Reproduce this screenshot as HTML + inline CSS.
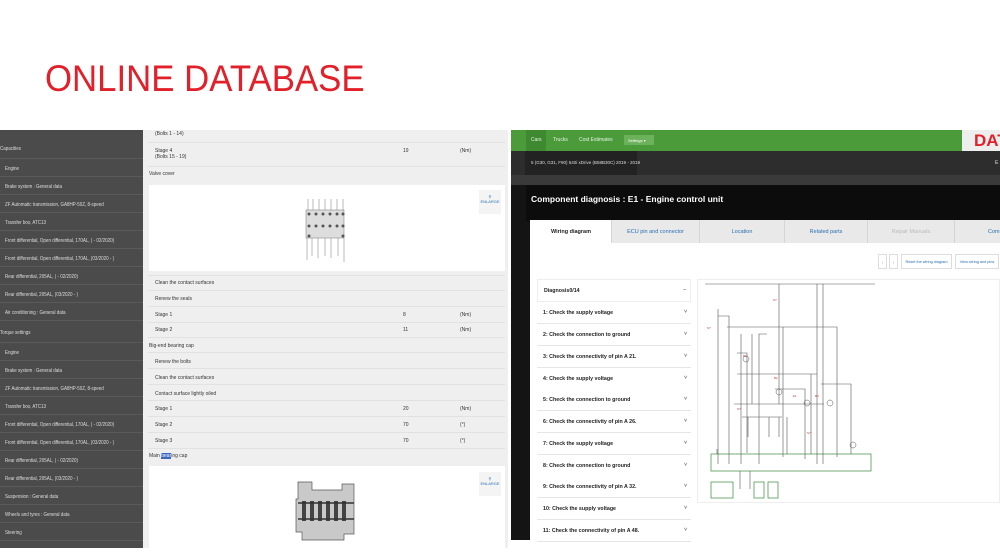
<!DOCTYPE html>
<html><head><meta charset="utf-8"><style>
*{margin:0;padding:0;box-sizing:border-box}
body{width:1000px;height:560px;background:#fff;position:relative;overflow:hidden;font-family:"Liberation Sans",sans-serif}
.a{position:absolute}
h1{position:absolute;left:45px;top:58px;font-weight:400;font-size:37px;color:#e2202a;white-space:nowrap;transform:scaleX(.94);transform-origin:left;font-family:"Liberation Sans",sans-serif}
.sb{left:0;top:130px;width:143px;height:418px;background:#4b4b4b}
.si{position:absolute;left:5px;font-size:5px;color:#ddd;white-space:nowrap;transform:scaleX(.9);transform-origin:left}
.sl{position:absolute;left:0;width:143px;height:1px;background:#5a5a5a}
.ct{left:143px;top:130px;width:365px;height:418px;background:#efefef}
.r{position:absolute;left:148px;width:357px;height:1px;background:#e2e2e2}
.t{position:absolute;font-size:5px;color:#333;white-space:nowrap}
.dl{position:absolute;left:537px;width:154px;height:22px;border-bottom:1px solid #e6e6e6;background:#fff;font-size:5.3px;color:#222;padding:8px 0 0 6px;font-weight:bold}
.dl span{position:absolute;right:4px;top:7px;font-size:5px;color:#666}
.tab{position:absolute;top:220px;height:23px;background:#e9e9e9;border-right:1px solid #d5d5d5;font-size:5.5px;color:#2a6fb4;text-align:center;padding-top:9px}
</style></head><body>
<h1>ONLINE DATABASE</h1>

<div class="a sb"></div>
<div class="si" style="top:146px;left:0">Capacities</div>
<div class="si" style="top:166px">Engine</div>
<div class="si" style="top:184px">Brake system : General data</div>
<div class="si" style="top:202px">ZF Automatic transmission, GA8HP-50Z, 8-speed</div>
<div class="si" style="top:220px">Transfer box, ATC13</div>
<div class="si" style="top:238px">Front differential, Open differential, 170AL, ( - 02/2020)</div>
<div class="si" style="top:256px">Front differential, Open differential, 170AL, (03/2020 - )</div>
<div class="si" style="top:274px">Rear differential, 205AL, ( - 02/2020)</div>
<div class="si" style="top:292px">Rear differential, 205AL, (03/2020 - )</div>
<div class="si" style="top:310px">Air conditioning : General data</div>
<div class="si" style="top:330px;left:0">Torque settings</div>
<div class="si" style="top:350px">Engine</div>
<div class="si" style="top:368px">Brake system : General data</div>
<div class="si" style="top:386px">ZF Automatic transmission, GA8HP-50Z, 8-speed</div>
<div class="si" style="top:404px">Transfer box, ATC13</div>
<div class="si" style="top:422px">Front differential, Open differential, 170AL, ( - 02/2020)</div>
<div class="si" style="top:440px">Front differential, Open differential, 170AL, (03/2020 - )</div>
<div class="si" style="top:458px">Rear differential, 205AL, ( - 02/2020)</div>
<div class="si" style="top:476px">Rear differential, 205AL, (03/2020 - )</div>
<div class="si" style="top:494px">Suspension : General data</div>
<div class="si" style="top:512px">Wheels and tyres : General data</div>
<div class="si" style="top:530px">Steering</div>
<div class="sl" style="top:158px"></div><div class="sl" style="top:176px"></div><div class="sl" style="top:194px"></div><div class="sl" style="top:212px"></div><div class="sl" style="top:230px"></div><div class="sl" style="top:248px"></div><div class="sl" style="top:266px"></div><div class="sl" style="top:284px"></div><div class="sl" style="top:302px"></div><div class="sl" style="top:320px"></div><div class="sl" style="top:342px"></div><div class="sl" style="top:360px"></div><div class="sl" style="top:378px"></div><div class="sl" style="top:396px"></div><div class="sl" style="top:414px"></div><div class="sl" style="top:432px"></div><div class="sl" style="top:450px"></div><div class="sl" style="top:468px"></div><div class="sl" style="top:486px"></div><div class="sl" style="top:504px"></div><div class="sl" style="top:522px"></div><div class="sl" style="top:540px"></div>

<div class="a ct"></div>
<div class="t" style="left:155px;top:131px">(Bolts 1 - 14)</div>
<div class="r" style="top:142px"></div>
<div class="t" style="left:155px;top:148px">Stage 4<br>(Bolts 15 - 19)</div>
<div class="t" style="left:403px;top:148px">19</div><div class="t" style="left:460px;top:148px">(Nm)</div>
<div class="r" style="top:166px"></div>
<div class="t" style="left:149px;top:171px">Valve cover</div>
<div class="a" style="left:149px;top:185px;width:356px;height:86px;background:#fff"></div>
<div class="a" style="left:479px;top:190px;width:22px;height:24px;background:#f4f4f4;font-size:4px;color:#2a6fb4;text-align:center;padding-top:4px">&#9906;<br>ENLARGE</div>
<svg class="a" style="left:303px;top:196px" width="45" height="68" viewBox="0 0 45 68"><g stroke="#777" stroke-width=".5" fill="none"><rect x="3" y="14" width="38" height="28" fill="#ddd"/><path d="M5 3v11M10 3v11M16 3v11M22 3v11M28 3v11M34 3v11M40 3v11M4 42v22M9 42v18M15 42v20M22 42v18M28 42v20M35 42v18M41 42v24"/></g><g fill="#555"><circle cx="6" cy="18" r="1.5"/><circle cx="13" cy="18" r="1.5"/><circle cx="20" cy="18" r="1.5"/><circle cx="27" cy="18" r="1.5"/><circle cx="34" cy="18" r="1.5"/><circle cx="40" cy="18" r="1.5"/><circle cx="6" cy="30" r="1.5"/><circle cx="13" cy="30" r="1.5"/><circle cx="20" cy="30" r="1.5"/><circle cx="27" cy="30" r="1.5"/><circle cx="34" cy="30" r="1.5"/><circle cx="40" cy="30" r="1.5"/><circle cx="6" cy="40" r="1.5"/><circle cx="40" cy="40" r="1.5"/></g></svg>
<div class="r" style="top:275px"></div>
<div class="t" style="left:155px;top:280px">Clean the contact surfaces</div>
<div class="r" style="top:290px"></div>
<div class="t" style="left:155px;top:296px">Renew the seals</div>
<div class="r" style="top:306px"></div>
<div class="t" style="left:155px;top:312px">Stage 1</div><div class="t" style="left:403px;top:312px">8</div><div class="t" style="left:460px;top:312px">(Nm)</div>
<div class="r" style="top:322px"></div>
<div class="t" style="left:155px;top:327px">Stage 2</div><div class="t" style="left:403px;top:327px">11</div><div class="t" style="left:460px;top:327px">(Nm)</div>
<div class="r" style="top:337px"></div>
<div class="t" style="left:149px;top:343px">Big-end bearing cap</div>
<div class="r" style="top:352px"></div>
<div class="t" style="left:155px;top:359px">Renew the bolts</div>
<div class="r" style="top:368px"></div>
<div class="t" style="left:155px;top:375px">Clean the contact surfaces</div>
<div class="r" style="top:384px"></div>
<div class="t" style="left:155px;top:391px">Contact surface lightly oiled</div>
<div class="r" style="top:400px"></div>
<div class="t" style="left:155px;top:406px">Stage 1</div><div class="t" style="left:403px;top:406px">20</div><div class="t" style="left:460px;top:406px">(Nm)</div>
<div class="r" style="top:416px"></div>
<div class="t" style="left:155px;top:422px">Stage 2</div><div class="t" style="left:403px;top:422px">70</div><div class="t" style="left:460px;top:422px">(°)</div>
<div class="r" style="top:432px"></div>
<div class="t" style="left:155px;top:438px">Stage 3</div><div class="t" style="left:403px;top:438px">70</div><div class="t" style="left:460px;top:438px">(°)</div>
<div class="r" style="top:448px"></div>
<div class="t" style="left:149px;top:453px">Main <span style="background:#3a66c4;color:#fff">bear</span>ing cap</div>
<div class="a" style="left:149px;top:466px;width:356px;height:82px;background:#fff"></div>
<div class="a" style="left:479px;top:472px;width:22px;height:24px;background:#f4f4f4;font-size:4px;color:#2a6fb4;text-align:center;padding-top:4px">&#9906;<br>ENLARGE</div>
<svg class="a" style="left:294px;top:479px" width="66" height="64" viewBox="0 0 66 64"><path d="M4 3h14v8h30v-6h12v50h-10v6H8v-8H2V20h2z" fill="#c9c9c9" stroke="#555" stroke-width=".7"/><g fill="#444"><rect x="8" y="22" width="4" height="20"/><rect x="16" y="22" width="4" height="20"/><rect x="24" y="22" width="4" height="20"/><rect x="32" y="22" width="4" height="20"/><rect x="40" y="22" width="4" height="20"/><rect x="48" y="22" width="4" height="20"/></g><path d="M4 24h56M4 40h56" stroke="#333" stroke-width="1.5"/></svg>

<!-- right panel -->
<div class="a" style="left:511px;top:130px;width:489px;height:410px;background:#141414"></div>
<div class="a" style="left:511px;top:130px;width:489px;height:21px;background:#4b9b3b"></div>
<div class="a" style="left:526px;top:130px;width:20px;height:21px;background:#3f8a31"></div>
<div class="t" style="left:531px;top:137px;color:#e8f4e4">Cars</div>
<div class="t" style="left:553px;top:137px;color:#e8f4e4">Trucks</div>
<div class="t" style="left:579px;top:137px;color:#e8f4e4">Cost Estimates</div>
<div class="a" style="left:624px;top:135px;width:30px;height:10px;background:#6bb25a;font-size:4px;color:#fff;padding:3px 0 0 4px">Settings ▾</div>
<div class="a" style="left:962px;top:130px;width:38px;height:21px;background:#eee;color:#e2202a;font-weight:bold;font-size:17px;padding:1px 0 0 12px;overflow:hidden">DAT</div>
<div class="a" style="left:511px;top:151px;width:489px;height:24px;background:#2d2d2d"></div>
<div class="a" style="left:525px;top:151px;width:112px;height:24px;background:#222"></div>
<div class="t" style="left:531px;top:160px;color:#ddd;font-size:4.5px">5 (G30, G31, F90) 540i xDrive (B58B30C) 2019 - 2019</div>
<div class="t" style="left:995px;top:160px;color:#ddd">E</div>
<div class="a" style="left:511px;top:175px;width:489px;height:10px;background:#3a3a3a"></div>
<div class="a" style="left:526px;top:185px;width:474px;height:36px;background:#0c0c0c"></div>
<div class="t" style="left:531px;top:194px;color:#fff;font-size:8.5px;font-weight:bold">Component diagnosis : E1 - Engine control unit</div>
<div class="a" style="left:530px;top:220px;width:470px;height:320px;background:#fff"></div>
<div class="tab" style="left:531px;width:81px;background:#fff;color:#222;font-weight:bold">Wiring diagram</div>
<div class="tab" style="left:612px;width:88px">ECU pin and connector</div>
<div class="tab" style="left:700px;width:85px">Location</div>
<div class="tab" style="left:785px;width:83px">Related parts</div>
<div class="tab" style="left:868px;width:87px;color:#bbb">Repair Manuals</div>
<div class="tab" style="left:955px;width:50px;text-align:left;padding-left:33px">Comp</div>
<div class="a" style="left:878px;top:254px;width:9px;height:15px;border:1px solid #ddd;font-size:4px;color:#888;text-align:center;padding-top:5px">‹</div>
<div class="a" style="left:889px;top:254px;width:9px;height:15px;border:1px solid #ddd;font-size:4px;color:#888;text-align:center;padding-top:5px">›</div>
<div class="a" style="left:901px;top:254px;width:51px;height:15px;border:1px solid #ddd;font-size:3.8px;color:#2a6fb4;text-align:center;padding-top:5px">Reset the wiring diagram</div>
<div class="a" style="left:955px;top:254px;width:44px;height:15px;border:1px solid #ddd;font-size:3.8px;color:#2a6fb4;text-align:center;padding-top:5px">View wiring and pins</div>

<div class="dl" style="top:279px;border:1px solid #eee;height:23px">Diagnosis0/14<span>–</span></div>
<div class="dl" style="top:302px">1: Check the supply voltage<span>˅</span></div>
<div class="dl" style="top:324px">2: Check the connection to ground<span>˅</span></div>
<div class="dl" style="top:346px">3: Check the connectivity of pin A 21.<span>˅</span></div>
<div class="dl" style="top:368px">4: Check the supply voltage<span>˅</span></div>
<div class="dl" style="top:389px">5: Check the connection to ground<span>˅</span></div>
<div class="dl" style="top:411px">6: Check the connectivity of pin A 26.<span>˅</span></div>
<div class="dl" style="top:433px">7: Check the supply voltage<span>˅</span></div>
<div class="dl" style="top:455px">8: Check the connection to ground<span>˅</span></div>
<div class="dl" style="top:476px">9: Check the connectivity of pin A 32.<span>˅</span></div>
<div class="dl" style="top:498px">10: Check the supply voltage<span>˅</span></div>
<div class="dl" style="top:520px">11: Check the connectivity of pin A 48.<span>˅</span></div>

<div class="a" style="left:697px;top:279px;width:303px;height:224px;border:1px solid #eee"></div>
<svg class="a" style="left:697px;top:279px" width="303" height="224" viewBox="0 0 303 224"><g stroke="#555" stroke-width=".6" fill="none">
<path d="M8 5H178M82 5v120M120 5v180M126 5v180M21 30v155M21 37h11v148M30 48h110v130M86 48v130M70 55h-8v130M44 55v130M40 95h80M40 74h10v100M104 95h10v80M55 55v70M124 105h30v70M37 125h90M78 110h30v70M45 138h40M51 138v20M62 138v20M72 138v20M82 138v20M90 138v37M62 65v60M20 170v5M43 192v18M53 192v18"/>
</g>
<g stroke="#3a8a3a" stroke-width=".7" fill="none"><rect x="14" y="175" width="160" height="17"/><rect x="14" y="203" width="22" height="16"/><rect x="57" y="203" width="10" height="16"/><rect x="71" y="203" width="10" height="16"/></g>
<g fill="#c33" font-size="3" font-family="Liberation Sans"><text x="76" y="22">S?</text><text x="10" y="50">S?</text><text x="46" y="78">B1</text><text x="77" y="100">B2</text><text x="96" y="118">E1</text><text x="118" y="118">B4</text><text x="40" y="131">S?</text><text x="110" y="155">S?</text></g>
<g fill="none" stroke="#555" stroke-width=".5"><circle cx="49" cy="80" r="3"/><circle cx="82" cy="113" r="3"/><circle cx="110" cy="124" r="3"/><circle cx="133" cy="124" r="3"/><circle cx="156" cy="166" r="3"/></g>
</svg>
</body></html>
